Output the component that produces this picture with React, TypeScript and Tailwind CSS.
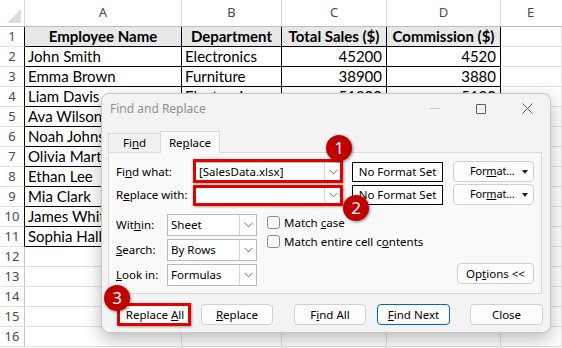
import React from 'react';
import clsx from 'clsx';

const rows: string[][] = [
    ['Employee Name', 'Department', 'Total Sales ($)', 'Commission ($)'],
    ['John Smith', 'Electronics', '45200', '4520'],
    ['Emma Brown', 'Furniture', '38900', '3880'],
    ['Liam Davis', 'Electronics', '51200', '5120'],
    ['Ava Wilson', 'Clothing', '29700', '2970'],
    ['Noah Johnson', 'Furniture', '41800', '4180'],
    ['Olivia Martinez', 'Electronics', '47300', '4730'],
    ['Ethan Lee', 'Clothing', '33600', '3360'],
    ['Mia Clark', 'Furniture', '36500', '3650'],
    ['James White', 'Electronics', '49800', '4980'],
    ['Sophia Hall', 'Clothing', '31200', '3120'],
];

const colWidths = ['w-[157px]', 'w-[100px]', 'w-[105px]', 'w-[114px]'];

const SheetRow = ({ n }: { n: number }) => {
    const data = rows[n - 1];
    const isHeader = n === 1;
    return (
        <div className="flex h-[20px]">
            <div
                className={clsx(
                    'w-[25px] shrink-0 flex items-center justify-center border-r border-b border-b-[#e1e1e1] text-[13px] text-[#4a4a4a] font-["Noto_Sans",sans-serif]',
                    data ? 'border-r-black' : 'border-r-[#c6c6c6]'
                )}
            >
                {n}
            </div>
            {colWidths.map((w, i) => (
                <div
                    key={i}
                    className={clsx(
                        w,
                        'shrink-0 flex items-center overflow-hidden whitespace-nowrap border-r border-b text-[15px]',
                        data ? 'border-black' : 'border-[#e1e1e1]',
                        isHeader && 'justify-center font-bold bg-[#e8e8e8]',
                        !isHeader && (i >= 2 ? 'justify-end pr-[4px]' : 'pl-[3px]')
                    )}
                >
                    {data ? data[i] : ''}
                </div>
            ))}
            <div className="flex-1 border-r border-b border-[#e1e1e1]" />
        </div>
    );
};

const Chevron = () => (
    <svg width="9" height="6" viewBox="0 0 9 6" fill="none">
        <path d="M0.5 0.8 L4.5 4.8 L8.5 0.8" stroke="#6b6b6b" strokeWidth="1" />
    </svg>
);

const Combo = ({ value, className }: { value: string; className: string }) => (
    <div className={clsx('flex bg-white border border-[#b9b9b9]', className)}>
        <div className="flex-1 flex items-center pl-[3px] whitespace-nowrap">{value}</div>
        <div className="w-[17px] flex items-center justify-center border-l border-[#d6d6d6]">
            <Chevron />
        </div>
    </div>
);

const Btn = ({ children, className }: { children: React.ReactNode; className?: string }) => (
    <div
        className={clsx(
            'h-[21px] flex items-center justify-center rounded-[4px] border bg-[#fdfdfd] whitespace-nowrap',
            className ?? 'border-[#d0d0d0]'
        )}
    >
        <span>{children}</span>
    </div>
);

const FormatBtn = () => (
    <div className="ml-[10px] w-[81px] h-[21px] flex items-center rounded-[4px] border border-[#d0d0d0] bg-[#fdfdfd] pl-[16px] pr-[5px] whitespace-nowrap">
        <span className="text-[11px] tracking-[-0.2px]">For<u>m</u>at...</span>
        <svg className="ml-auto" width="6" height="4" viewBox="0 0 6 4">
            <path d="M0 0 L6 0 L3 4 Z" fill="#222" />
        </svg>
    </div>
);

const Label = ({ children, className }: { children: React.ReactNode; className: string }) => (
    <div className={clsx('shrink-0 whitespace-nowrap', className)}>{children}</div>
);

const Checkbox = ({ children }: { children: React.ReactNode }) => (
    <div className="flex items-center h-[13px]">
        <div className="w-[13px] h-[13px] rounded-[3px] border border-[#8d8d8d] bg-[#fbfbfb]" />
        <span className="ml-[4px] whitespace-nowrap">{children}</span>
    </div>
);

const Badge = ({ n, className }: { n: string; className: string }) => (
    <div
        className={clsx(
            'absolute w-[26px] h-[26px] rounded-full bg-[#c00000] text-white flex items-center justify-center text-[17px] font-["Noto_Sans",sans-serif] shadow-[1px_1px_3px_rgba(0,0,0,0.45)]',
            className
        )}
    >
        {n}
    </div>
);

const FindReplaceDialog = () => (
    <div className="absolute left-[101px] top-[93px] w-[450px] h-[240px] rounded-[8px] border border-[#c6c6c6] bg-[#f3f3f3] shadow-[0_6px_18px_rgba(0,0,0,0.28)] flex flex-col font-['Noto_Sans',sans-serif] text-[11.5px] text-black">
        {/* title bar */}
        <div className="h-[29px] flex items-center">
            <span className="pl-[8px] text-[12px] text-[#8f8f8f]">Find and Replace</span>
            <div className="ml-auto flex h-full">
                <div className="w-[46px] flex items-center justify-center">
                    <div className="w-[10px] h-px bg-[#c8c8c8]" />
                </div>
                <div className="w-[46px] flex items-center justify-center">
                    <div className="w-[10px] h-[10px] border border-[#5c5c5c] rounded-[1px]" />
                </div>
                <div className="w-[46px] flex items-center justify-center">
                    <svg width="11" height="11" viewBox="0 0 11 11">
                        <path d="M0.5 0.5 L10.5 10.5 M10.5 0.5 L0.5 10.5" stroke="#5c5c5c" strokeWidth="1" />
                    </svg>
                </div>
            </div>
        </div>

        {/* tabs */}
        <div className="mt-[8px] ml-[6px] flex items-end h-[21px]">
            <div className="w-[52px] h-[19px] flex items-center justify-center border-t border-l border-[#dadada] bg-[#f0f0f0]">
                <span>Fi<u>n</u>d</span>
            </div>
            <div className="relative z-10 w-[60px] h-[22px] -mb-px flex items-center justify-center border-t border-l border-r border-[#dadada] bg-[#f9f9f9]">
                <span>Re<u>p</u>lace</span>
            </div>
        </div>

        {/* panel */}
        <div className="ml-[6px] w-[434px] h-[142px] border border-[#dadada] bg-[#f9f9f9] flex flex-col px-[7px] pt-[8px]">
            <div className="flex items-center h-[21px]">
                <Label className="w-[79px]">Fi<u>n</u>d what:</Label>
                <Combo value="[SalesData.xlsx]" className="w-[147px] h-[19px]" />
                <div className="ml-[10px] w-[91px] h-[20px] border border-black bg-white flex items-center justify-center">No Format Set</div>
                <FormatBtn />
            </div>
            <div className="flex items-center h-[21px] mt-[2px]">
                <Label className="w-[79px]">R<u>e</u>place with:</Label>
                <Combo value="" className="w-[147px] h-[19px]" />
                <div className="ml-[10px] w-[91px] h-[20px] border border-black bg-white flex items-center justify-center">No Format Set</div>
                <FormatBtn />
            </div>

            <div className="flex mt-[9px]">
                <div className="flex flex-col gap-[3px]">
                    <div className="flex items-center">
                        <Label className="w-[51px]">Wit<u>h</u>in:</Label>
                        <Combo value="Sheet" className="w-[90px] h-[22px]" />
                    </div>
                    <div className="flex items-center">
                        <Label className="w-[51px]"><u>S</u>earch:</Label>
                        <Combo value="By Rows" className="w-[90px] h-[22px]" />
                    </div>
                    <div className="flex items-center">
                        <Label className="w-[51px]"><u>L</u>ook in:</Label>
                        <Combo value="Formulas" className="w-[90px] h-[22px]" />
                    </div>
                </div>
                <div className="ml-[10px] flex-1 flex flex-col">
                    <div className="mt-[2px]">
                        <Checkbox>Match <u>c</u>ase</Checkbox>
                    </div>
                    <div className="mt-[6px]">
                        <Checkbox>Match entire cell c<u>o</u>ntents</Checkbox>
                    </div>
                    <div className="mt-auto mb-[2px] self-end">
                        <Btn className="w-[77px] border-[#d0d0d0]">Op<u>t</u>ions &lt;&lt;</Btn>
                    </div>
                </div>
            </div>
        </div>

        {/* buttons */}
        <div className="mt-[10px] flex pl-[17px]">
            <Btn className="w-[72px] border-[#d0d0d0]">Replace <u>A</u>ll</Btn>
            <Btn className="ml-[10px] w-[72px] border-[#d0d0d0]"><u>R</u>eplace</Btn>
            <Btn className="ml-[21px] w-[72px] border-[#d0d0d0]">F<u>i</u>nd All</Btn>
            <Btn className="ml-[11px] w-[73px] border-[#0067c0] shadow-[inset_0_0_0_1px_#ffffff]"><u>F</u>ind Next</Btn>
            <Btn className="ml-[20px] w-[73px] border-[#d0d0d0]">Close</Btn>
        </div>
    </div>
);

const App = () => {
    const letters = [
        { l: 'A', w: 'w-[157px]' },
        { l: 'B', w: 'w-[100px]' },
        { l: 'C', w: 'w-[105px]' },
        { l: 'D', w: 'w-[114px]' },
    ];
    return (
        <div className="relative w-[562px] h-[348px] overflow-hidden bg-white font-['Lato',sans-serif] text-black">
            {/* column header */}
            <div className="flex h-[27px] border-b border-[#bdbdbd] bg-white text-[13px] text-[#4a4a4a] font-['Noto_Sans',sans-serif]">
                <div className="w-[25px] shrink-0 flex items-end justify-end p-[3px] border-r border-[#d8d8d8]">
                    <svg width="14" height="14" viewBox="0 0 14 14">
                        <path d="M14 0 L14 14 L0 14 Z" fill="#dcdcdc" />
                    </svg>
                </div>
                {letters.map((c) => (
                    <div key={c.l} className={clsx(c.w, 'shrink-0 flex items-center justify-center border-r border-[#d8d8d8]')}>
                        {c.l}
                    </div>
                ))}
                <div className="flex-1 flex items-center justify-center pr-[2px]">E</div>
            </div>
            {Array.from({ length: 16 }, (_, i) => (
                <SheetRow key={i} n={i + 1} />
            ))}

            <FindReplaceDialog />

            {/* annotations */}
            <div className="absolute left-[193px] top-[159px] w-[150px] h-[24px] border-[3px] border-[#e50000] shadow-[1px_1px_2px_rgba(0,0,0,0.35)]" />
            <div className="absolute left-[193px] top-[185px] w-[150px] h-[21px] border-[3px] border-[#e50000] shadow-[1px_1px_2px_rgba(0,0,0,0.35)]" />
            <div className="absolute left-[117px] top-[303px] w-[74px] h-[23px] border-[3px] border-[#e50000] shadow-[1px_1px_2px_rgba(0,0,0,0.35)]" />
            <Badge n="1" className="left-[326px] top-[135px]" />
            <Badge n="2" className="left-[343px] top-[195px]" />
            <Badge n="3" className="left-[104px] top-[285px]" />
        </div>
    );
};

export default App;
